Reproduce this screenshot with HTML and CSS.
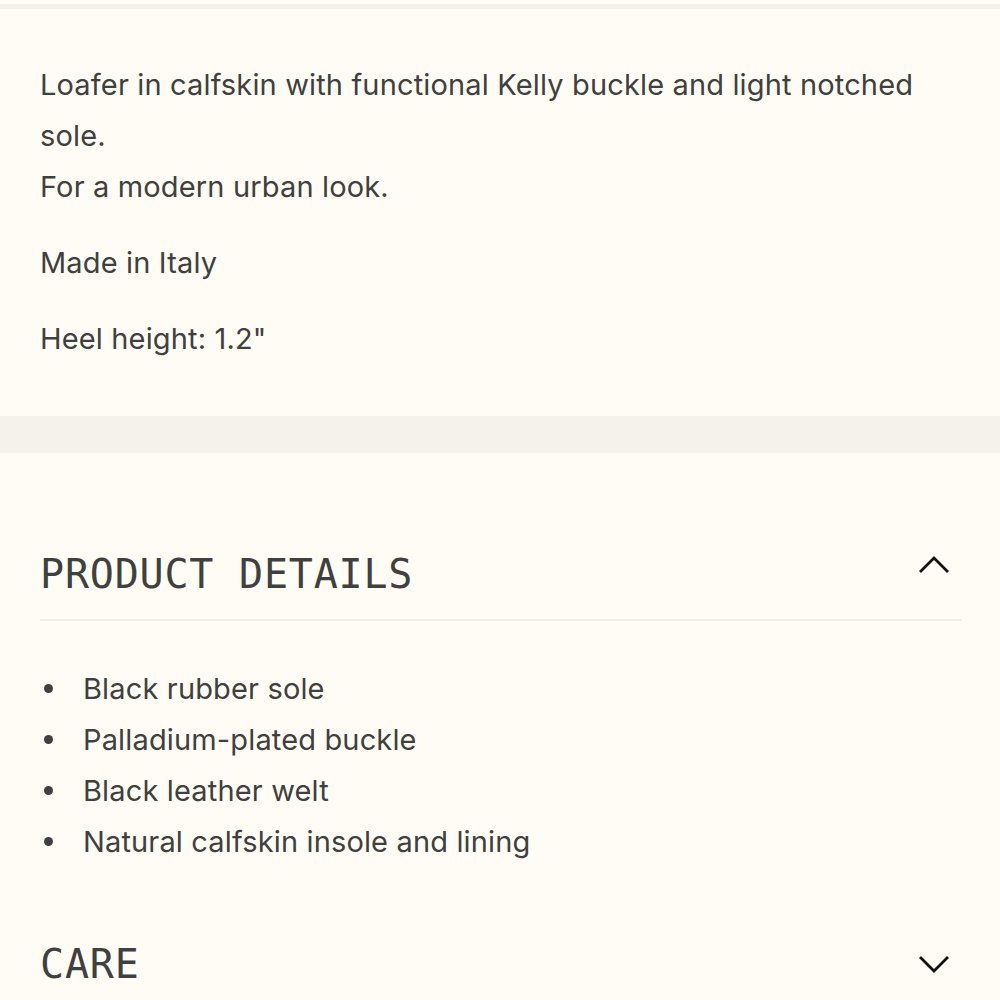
FILE: index.html
```html
<!DOCTYPE html>
<html lang="en">
<head>
<meta charset="utf-8">
<title>Product</title>
<link rel="stylesheet" href="styles.css">
</head>
<body>
<div class="page">
  <div class="strip"></div>
  <section class="desc">
    <p>Loafer in calfskin with functional Kelly buckle and light notched sole.<br>For a modern urban look.</p>
    <p>Made in Italy</p>
    <p>Heel height: 1.2"</p>
  </section>
  <div class="band"></div>
  <section class="accordion">
    <div class="acc-head open">
      <h2>PRODUCT DETAILS</h2>
      <svg class="chev chev-up" width="32" height="20" viewBox="0 0 32 20"><path d="M2 17 L16 3 L30 17" fill="none" stroke="#111" stroke-width="2.8"/></svg>
    </div>
    <ul class="acc-body">
      <li>Black rubber sole</li>
      <li>Palladium-plated buckle</li>
      <li>Black leather welt</li>
      <li>Natural calfskin insole and lining</li>
    </ul>
    <div class="acc-head">
      <h2>CARE</h2>
      <svg class="chev" width="32" height="20" viewBox="0 0 32 20"><path d="M2 3 L16 17 L30 3" fill="none" stroke="#111" stroke-width="2.8"/></svg>
    </div>
  </section>
</div>
</body>
</html>
```

FILE: styles.css
```css
html, body {
  margin: 0;
  padding: 0;
  background: #fffcf5;
}
.page {
  width: 1000px;
  font-family: Inter, "Noto Sans", sans-serif;
  color: #404040;
  padding-top: 4px;
}
.strip {
  height: 5px;
  background: #f4f1ec;
}
.desc {
  padding: 50px 40px 52px 40px;
}
.desc p {
  margin: 0 0 25px 0;
  font-size: 29px;
  line-height: 51px;
  letter-spacing: 0.15px;
}
.desc p:last-child {
  margin-bottom: 0;
}
.band {
  height: 37px;
  background: #f5f1eb;
}
.accordion {
  padding: 0 38px 0 40px;
}
.acc-head {
  display: flex;
  justify-content: space-between;
  align-items: center;
  padding-top: 96px;
}
.acc-head.open {
  padding-bottom: 20px;
  border-bottom: 2px solid #f1eee8;
}
.acc-head h2 {
  margin: 0;
  font-family: "DejaVu Sans Mono", monospace;
  font-weight: normal;
  font-size: 40px;
  line-height: 50px;
  letter-spacing: 0.8px;
  color: #404040;
}
.chev {
  margin-right: 12px;
}
.chev-up {
  margin-bottom: 18px;
}
.acc-body {
  margin: 0;
  padding: 42px 0 0 0;
  list-style: none;
}
.acc-body li {
  display: flex;
  align-items: center;
  font-size: 29px;
  line-height: 51px;
  letter-spacing: 0.15px;
}
.acc-body li::before {
  content: "";
  flex: none;
  width: 9px;
  height: 9px;
  border-radius: 50%;
  background: #404040;
  margin: 0 30px 0 4px;
}
.acc-body + .acc-head {
  padding-top: 72px;
}
```
